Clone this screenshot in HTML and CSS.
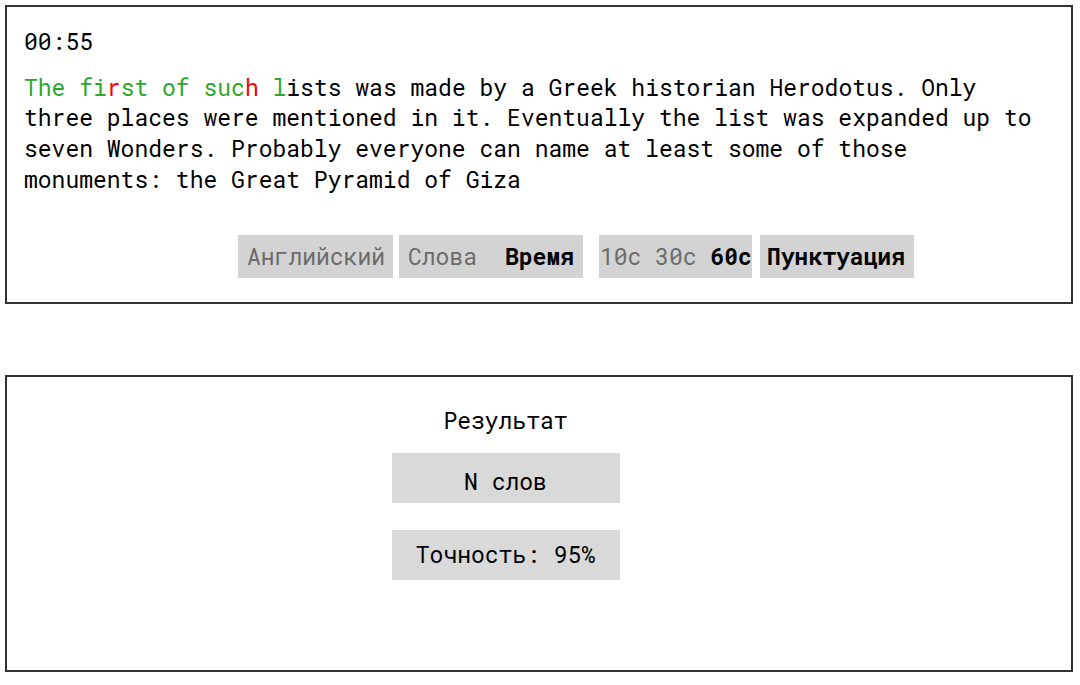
FILE: index.html
```html
<!DOCTYPE html>
<html lang="ru">
<head>
<meta charset="utf-8">
<title>Typing test</title>
<link rel="stylesheet" href="styles.css">
</head>
<body>
<section class="panel typing">
  <div class="timer">00:55</div>
  <p class="text"><span class="ok">The fi</span><span class="err">r</span><span class="ok">st of suc</span><span class="err">h</span><span class="ok"> l</span>ists was made by a Greek historian Herodotus. Only three places were mentioned in it. Eventually the list was expanded up to seven Wonders. Probably everyone can name at least some of those monuments: the Great Pyramid of Giza</p>
  <div class="options">
    <div class="opt opt-lang"><span class="dim">Английский</span></div>
    <div class="opt opt-mode"><span class="dim">Слова</span><span class="on mode-gap">Время</span></div>
    <div class="opt opt-time"><span class="dim">10c</span> <span class="dim">30c</span> <span class="on">60c</span></div>
    <div class="opt opt-punct"><span class="on">Пунктуация</span></div>
  </div>
</section>
<section class="panel result">
  <div class="result-title">Результат</div>
  <div class="result-item result-words">N слов</div>
  <div class="result-item">Точность: 95%</div>
</section>
</body>
</html>
```

FILE: styles.css
```css
html, body {
  margin: 0;
  padding: 0;
  background: #fff;
}
body {
  padding: 5px 7px 0 5px;
  font-family: "Roboto Mono", "DejaVu Sans Mono", "Liberation Mono", monospace;
  font-size: 23px;
  line-height: 30.7px;
  color: #000;
}
.panel {
  border: 2px solid #333;
  box-sizing: border-box;
}
.typing {
  height: 299px;
  padding: 19px 17px 0 17px;
  display: flex;
  flex-direction: column;
}
.timer {
  margin: 0;
}
.text {
  margin: 15px 0 0 0;
}
.ok { color: #2ca52c; }
.err { color: #ff0000; }
.options {
  margin-top: 40px;
  padding-left: 214px;
  display: flex;
  align-items: stretch;
}
.opt {
  background: #d3d3d3;
  height: 43px;
  box-sizing: border-box;
  padding: 6px 8px;
  white-space: pre;
}
.dim { color: #6b6b6b; }
.on { color: #000; font-weight: bold; }
.mode-gap { margin-left: 28px; }
.opt-lang { width: 155px; padding-left: 9px; }
.opt-mode { margin-left: 6px; width: 184px; padding-left: 9px; }
.opt-time { margin-left: 16px; width: 153px; padding: 6px 0 6px 1px; }
.opt-punct { margin-left: 8px; width: 154px; padding-left: 7px; }

.result {
  margin-top: 71px;
  height: 297px;
  padding: 28px 67px 0 0;
  display: flex;
  flex-direction: column;
  align-items: center;
}
.result-title {
  margin-bottom: 17px;
}
.result-item {
  width: 228px;
  height: 50px;
  box-sizing: border-box;
  background: #d9d9d9;
  display: flex;
  align-items: center;
  justify-content: center;
  white-space: pre;
  margin-bottom: 27px;
}
.result-words {
  padding-top: 7px;
}
```
